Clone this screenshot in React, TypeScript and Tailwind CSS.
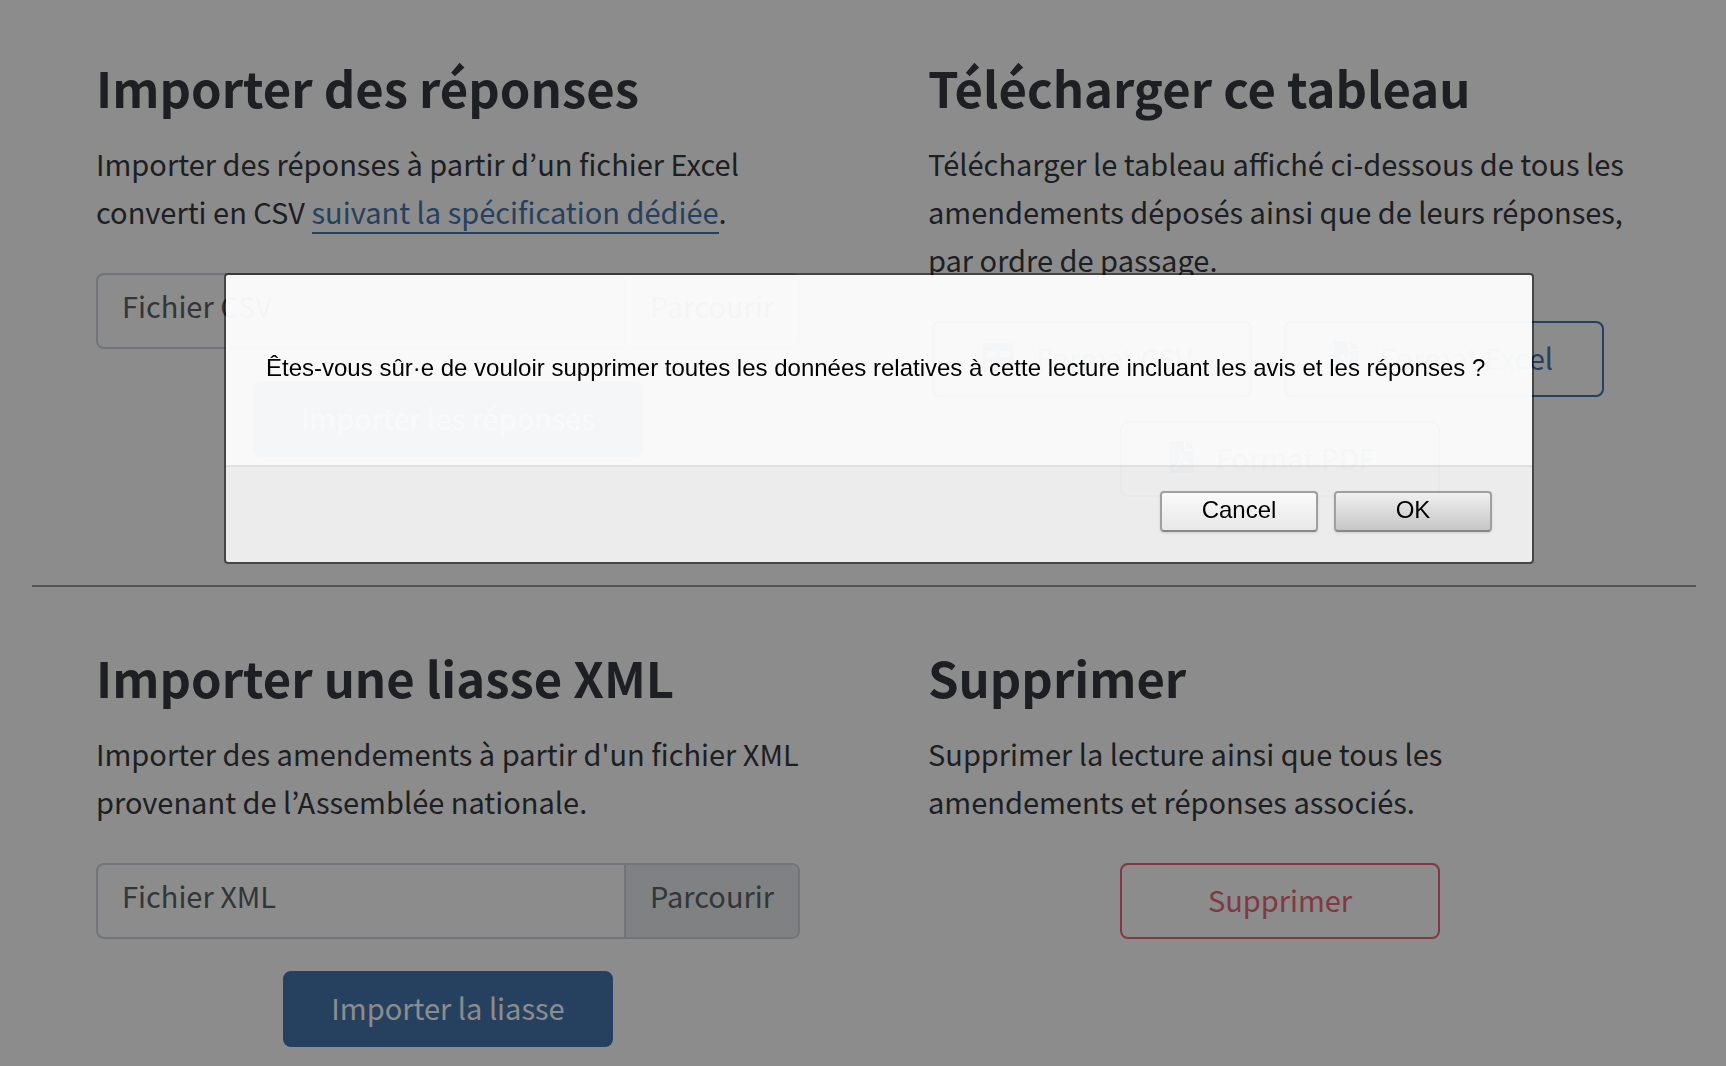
import React from "react";
import { FaTable, FaFileExcel, FaFilePdf } from "react-icons/fa";

function Panel({ title, children }: { title: string; children: React.ReactNode }) {
  return (
    <section className="px-16">
      <h2 className="mb-[19px] text-[49px] font-semibold leading-[67px]">{title}</h2>
      {children}
    </section>
  );
}

function FileField({ id, label }: { id: string; label: string }) {
  return (
    <div className="mt-[38px]">
      <input id={id} type="file" className="sr-only" />
      <label htmlFor={id} className="flex overflow-hidden rounded-lg border-2 border-[#ced4da] bg-white text-[#5c6369]">
        <span className="flex-1 px-6 pb-[18px] pt-1.5">{label}</span>
        <span className="border-l-2 border-[#ced4da] bg-[#e9ecef] px-6 pb-[18px] pt-1.5">Parcourir</span>
      </label>
    </div>
  );
}

function Submit({ children }: { children: React.ReactNode }) {
  return (
    <div className="mt-8 flex justify-center">
      <button type="submit" className="rounded-lg border-2 border-[#4575ad] bg-[#4575ad] px-[46px] pb-3.5 pt-2.5 text-white">
        {children}
      </button>
    </div>
  );
}

function Format({ icon, children }: { icon: React.ReactNode; children: React.ReactNode }) {
  return (
    <a
      href="#"
      className="flex w-80 items-center gap-[22px] rounded-lg border-2 border-[#4575ad] pb-3.5 pl-12 pt-2.5 text-[#4575ad]"
    >
      {icon}
      {children}
    </a>
  );
}

export default function App() {
  return (
    <div className="min-h-screen bg-white pl-8 pr-[30px] font-['Noto_Sans_CJK_KR',sans-serif] text-[29px] leading-[48px] text-[#363a3e]">
      <main lang="fr">
        <div className="grid grid-cols-2 pb-[88px] pt-[53px]">
          <Panel title="Importer des réponses">
            <p>
              Importer des réponses à partir d’un fichier Excel converti en CSV{" "}
              <a href="#" className="border-b-2 border-[#4575ad] text-[#4575ad]">
                suivant la spécification dédiée
              </a>
              .
            </p>
            <FileField id="csv" label="Fichier CSV" />
            <Submit>Importer les réponses</Submit>
          </Panel>
          <Panel title="Télécharger ce tableau">
            <p>
              Télécharger le tableau affiché ci-dessous de tous les amendements déposés ainsi que de leurs réponses,
              par ordre de passage.
            </p>
            <div className="mt-[38px] flex flex-col items-center gap-6">
              <div className="flex gap-8 pr-6">
                <Format icon={<FaTable className="size-8" />}>Format CSV</Format>
                <Format icon={<FaFileExcel className="h-8 w-6" />}>Format Excel</Format>
              </div>
              <Format icon={<FaFilePdf className="h-8 w-6" />}>Format PDF</Format>
            </div>
          </Panel>
        </div>
        <div className="grid grid-cols-2 border-t-2 border-[#999] pt-14">
          <Panel title="Importer une liasse XML">
            <p>Importer des amendements à partir d'un fichier XML provenant de l’Assemblée nationale.</p>
            <FileField id="xml" label="Fichier XML" />
            <Submit>Importer la liasse</Submit>
          </Panel>
          <Panel title="Supprimer">
            <p className="max-w-[560px]">Supprimer la lecture ainsi que tous les amendements et réponses associés.</p>
            <div className="mt-[38px] flex justify-center">
              <button type="button" className="w-80 rounded-lg border-2 border-[#e8697b] pb-3.5 pt-2.5 text-[#e8697b]">
                Supprimer
              </button>
            </div>
          </Panel>
        </div>
      </main>

      <div className="fixed inset-0 flex items-start justify-center bg-black/45 pl-8 pt-[273px] font-['Liberation_Sans',sans-serif] text-[24px] leading-7 text-black">
        <div
          role="alertdialog"
          aria-modal="true"
          aria-describedby="message"
          className="w-full max-w-[1310px] overflow-hidden rounded border-2 border-black/50 bg-[#fdfdfd]/96 bg-clip-padding"
        >
          <p id="message" className="px-10 pb-[83px] pt-[79px]">
            Êtes-vous sûr·e de vouloir supprimer toutes les données relatives à cette lecture incluant les avis et les
            réponses ?
          </p>
          <div className="flex justify-end gap-4 border-t-2 border-black/5 bg-black/5 px-10 pb-[30px] pt-6">
            <button
              type="button"
              className="h-[41px] w-[158px] rounded border-2 border-[#a0a0a0] border-b-[#888] bg-linear-to-b from-[#fafafa] to-[#e8e8e8] pb-1 shadow"
            >
              Cancel
            </button>
            <button
              type="button"
              className="h-[41px] w-[158px] rounded border-2 border-[#a0a0a0] border-b-[#888] bg-linear-to-b from-[#f0f0f0] to-[#c6c6c6] pb-1 shadow"
            >
              OK
            </button>
          </div>
        </div>
      </div>
    </div>
  );
}
